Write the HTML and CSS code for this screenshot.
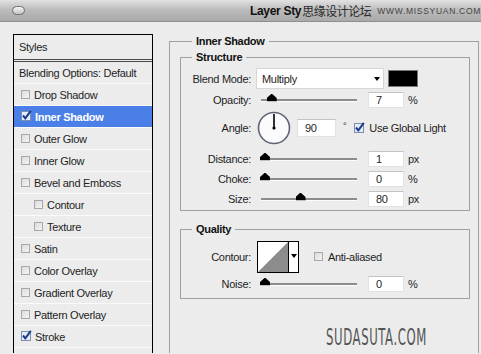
FILE: index.html
```html
<!DOCTYPE html>
<html lang="en">
<head>
    <meta charset="UTF-8">
    <meta name="viewport" content="width=device-width, initial-scale=1.0">
    <title>Layer Style</title>
    <link rel="stylesheet" href="styles.css">
</head>
<body>
    <div class="titlebar">
        <span class="pill"></span>
        <span class="title">Layer Sty</span><span class="wm-cn">思缘设计论坛</span><span class="wm-url">WWW.MISSYUAN.COM</span>
    </div>

    <div class="main">
        <ul class="styles-list">
            <li class="head">Styles</li>
            <li class="blend">Blending Options: Default</li>
            <li><span class="cb"></span>Drop Shadow</li>
            <li class="selected">
                <svg class="cb-on" width="11" height="11" viewBox="0 0 11 11"><rect x="0.5" y="1.5" width="9" height="9" fill="#e4ecf8" stroke="#7d8fae"/><path d="M2 5.5 L4.3 8.3 L9.8 0.8" fill="none" stroke="#1b3c8e" stroke-width="2"/></svg>Inner Shadow
            </li>
            <li><span class="cb"></span>Outer Glow</li>
            <li><span class="cb"></span>Inner Glow</li>
            <li><span class="cb"></span>Bevel and Emboss</li>
            <li class="sub"><span class="cb"></span>Contour</li>
            <li class="sub"><span class="cb"></span>Texture</li>
            <li><span class="cb"></span>Satin</li>
            <li><span class="cb"></span>Color Overlay</li>
            <li><span class="cb"></span>Gradient Overlay</li>
            <li><span class="cb"></span>Pattern Overlay</li>
            <li>
                <svg class="cb-on" width="11" height="11" viewBox="0 0 11 11"><rect x="0.5" y="1.5" width="9" height="9" fill="#e4ecf8" stroke="#7d8fae"/><path d="M2 5.5 L4.3 8.3 L9.8 0.8" fill="none" stroke="#1b3c8e" stroke-width="2"/></svg>Stroke
            </li>
            <li></li>
        </ul>

        <fieldset class="group outer">
            <legend>Inner Shadow</legend>

            <fieldset class="group structure">
                <legend>Structure</legend>
                <div class="row r-blend">
                    <label>Blend Mode:</label>
                    <div class="select">Multiply<span class="arrow"></span></div>
                    <span class="swatch"></span>
                </div>
                <div class="row r-small">
                    <label>Opacity:</label>
                    <div class="slider"><span class="thumb" style="left: 7%"></span></div>
                    <span class="field">7</span><span class="unit">%</span>
                </div>
                <div class="row r-angle">
                    <label>Angle:</label>
                    <svg class="dial" width="34" height="34" viewBox="0 0 34 34">
                        <circle cx="17" cy="17" r="15.5" fill="#fbfbfd" stroke="#5d6474" stroke-width="1.6"/>
                        <line x1="17" y1="17" x2="17" y2="3" stroke="#000" stroke-width="1.6"/>
                        <circle cx="17" cy="17" r="1.6" fill="#000"/>
                    </svg>
                    <span class="field wide">90</span><span class="deg">°</span>
                    <svg class="cb-on global" width="11" height="11" viewBox="0 0 11 11"><rect x="0.5" y="1.5" width="9" height="9" fill="#e4ecf8" stroke="#7d8fae"/><path d="M2 5.5 L4.3 8.3 L9.8 0.8" fill="none" stroke="#1b3c8e" stroke-width="2"/></svg>
                    <span>Use Global Light</span>
                </div>
                <div class="row r-small gap-big">
                    <label>Distance:</label>
                    <div class="slider"><span class="thumb" style="left: 0%"></span></div>
                    <span class="field">1</span><span class="unit">px</span>
                </div>
                <div class="row r-small">
                    <label>Choke:</label>
                    <div class="slider"><span class="thumb" style="left: 0%"></span></div>
                    <span class="field">0</span><span class="unit">%</span>
                </div>
                <div class="row r-small">
                    <label>Size:</label>
                    <div class="slider"><span class="thumb" style="left: 37%"></span></div>
                    <span class="field">80</span><span class="unit">px</span>
                </div>
            </fieldset>

            <fieldset class="group quality">
                <legend>Quality</legend>
                <div class="row r-contour">
                    <label>Contour:</label>
                    <div class="contour">
                        <svg width="30" height="30" viewBox="0 0 30 30"><rect width="30" height="30" fill="#fff"/><path d="M0 30 L30 0 L30 30 Z" fill="#8c8c8c"/></svg>
                        <span class="drop"><span class="arrow"></span></span>
                    </div>
                    <span class="cb anti"></span><span>Anti-aliased</span>
                </div>
                <div class="row r-small">
                    <label>Noise:</label>
                    <div class="slider"><span class="thumb" style="left: 0%"></span></div>
                    <span class="field">0</span><span class="unit">%</span>
                </div>
            </fieldset>

            <div class="credit">SUDASUTA.COM</div>
        </fieldset>
    </div>
</body>
</html>
```

FILE: styles.css
```css
* {
    box-sizing: border-box;
}
body {
    margin: 0;
    width: 481px;
    height: 354px;
    overflow: hidden;
    background: #ececec;
    font-family: "Liberation Sans", Arial, sans-serif;
    font-size: 11px;
    letter-spacing: -0.3px;
    color: #1e1e1e;
}

/* title bar */
.titlebar {
    height: 22px;
    display: flex;
    align-items: center;
    background: linear-gradient(#e2e2e2, #bcbcbc 45%, #a9a9a9);
    border-bottom: 1px solid #8f8f8f;
    white-space: nowrap;
}
.pill {
    width: 21px;
    height: 9px;
    margin-left: 12px;
    border: 1px solid #707070;
    border-radius: 5px;
    background: linear-gradient(#f6f6f6, #c2c2c2);
}
.title {
    margin-left: 225px;
    font-weight: bold;
    font-size: 12px;
    color: #111;
}
.wm-cn {
    margin-left: 1px;
    font-family: "Noto Sans CJK SC", sans-serif;
    font-size: 12px;
    color: #2a2a2a;
    letter-spacing: -0.5px;
}
.wm-url {
    margin-left: 6px;
    font-size: 8.5px;
    letter-spacing: 0.7px;
    color: #454545;
}

.main {
    display: flex;
    align-items: flex-start;
    height: 331px;
    overflow: hidden;
    padding: 12px 0 0 13px;
}

/* styles list */
.styles-list {
    list-style: none;
    margin: 0;
    padding: 0;
    width: 140px;
    height: 319px;
    overflow: hidden;
    border: 1px solid #000;
    border-bottom: none;
}
.styles-list li {
    height: 22px;
    display: flex;
    align-items: center;
    padding-left: 7px;
    border-bottom: 1px solid #fbfbfb;
}
.styles-list li.head {
    height: 27px;
    padding-left: 5px;
    border-bottom: 3px double #4a4a4a;
}
.styles-list li.blend {
    padding-left: 5px;
}
.styles-list li.sub {
    padding-left: 20px;
}
.styles-list li.selected {
    background: #4b7fe8;
    color: #fff;
    font-weight: bold;
}
.cb {
    width: 9px;
    height: 9px;
    margin-right: 4px;
    border: 1px solid #a8a8a8;
    background: linear-gradient(135deg, #dcdcdc, #f4f4f4);
}
.cb-on {
    margin: -2px 3px 0 0;
    flex-shrink: 0;
}

/* group boxes */
.group {
    margin: 0;
    padding: 0;
    min-width: 0;
    border: 1px solid #a0a0a0;
}
.group legend {
    padding: 0 4px;
    margin-left: 11px;
    line-height: 14px;
    font-weight: bold;
    color: #111;
}
.outer {
    width: 310px;
    height: 330px;
    margin-left: 16px;
    padding: 2px 8px 0 10px;
}
.outer > legend {
    margin-left: 12px;
}
.structure {
    padding: 4px 0 3px;
}
.quality {
    margin-top: 11px;
    padding: 5px 0 6px;
}

.row {
    display: flex;
    align-items: center;
    white-space: nowrap;
}
.row label {
    width: 70px;
    text-align: right;
}
.r-blend {
    height: 21px;
}
.r-small {
    height: 16px;
    margin-top: 4px;
}
.r-blend + .r-small {
    margin-top: 3px;
}
.r-angle {
    height: 32px;
    margin-top: 4px;
}
.row.gap-big {
    margin-top: 7px;
}
.r-contour {
    height: 31px;
}

.select {
    width: 128px;
    height: 21px;
    margin-left: 5px;
    padding-left: 5px;
    display: flex;
    align-items: center;
    background: #fff;
    border: 1px solid #d6d6d6;
}
.arrow {
    width: 0;
    height: 0;
    border-left: 3.5px solid transparent;
    border-right: 3.5px solid transparent;
    border-top: 4px solid #000;
}
.select .arrow {
    margin-left: auto;
    margin-right: 3px;
}
.swatch {
    width: 30px;
    height: 17px;
    margin-left: 4px;
    background: #000;
    border: 1px solid #7a7a7a;
}

.slider {
    position: relative;
    width: 96px;
    height: 3px;
    margin-left: 10px;
    background: #8c8c8c;
    border-bottom: 1px solid #fdfdfd;
}
.thumb {
    position: absolute;
    top: -5px;
    width: 10px;
    height: 8px;
    margin-left: -1px;
    background: #000;
    clip-path: polygon(50% 0, 100% 55%, 100% 100%, 0 100%, 0 55%);
    border-bottom: 1px solid #fff;
}

.field {
    width: 36px;
    height: 16px;
    margin-left: 11px;
    padding-left: 7px;
    line-height: 15px;
    background: #fff;
    border: 1px solid #e2e2e2;
    border-top-color: #c4c4c4;
}
.field.wide {
    width: 39px;
    height: 18px;
    margin-left: 6px;
    line-height: 17px;
}
.unit {
    margin-left: 4px;
}
.deg {
    margin-left: 7px;
    margin-top: -5px;
    font-size: 9px;
}
.dial {
    margin-left: 6px;
}
.cb-on.global {
    margin: -2px 4px 0 8px;
}

.contour {
    display: flex;
    height: 32px;
    margin-left: 6px;
    border: 1px solid #000;
    background: #fff;
}
.contour .drop {
    width: 10px;
    display: flex;
    justify-content: center;
    padding-top: 12px;
    border-left: 1px solid #000;
}
.cb.anti {
    margin-left: 15px;
    margin-right: 5px;
}

.credit {
    margin: 26px 0 0 146px;
    font-family: "DejaVu Sans Condensed", "DejaVu Sans", sans-serif;
    font-weight: 200;
    font-size: 13px;
    line-height: 13px;
    letter-spacing: 0.6px;
    color: #555;
    transform: scaleY(1.8);
    transform-origin: left top;
}
```
